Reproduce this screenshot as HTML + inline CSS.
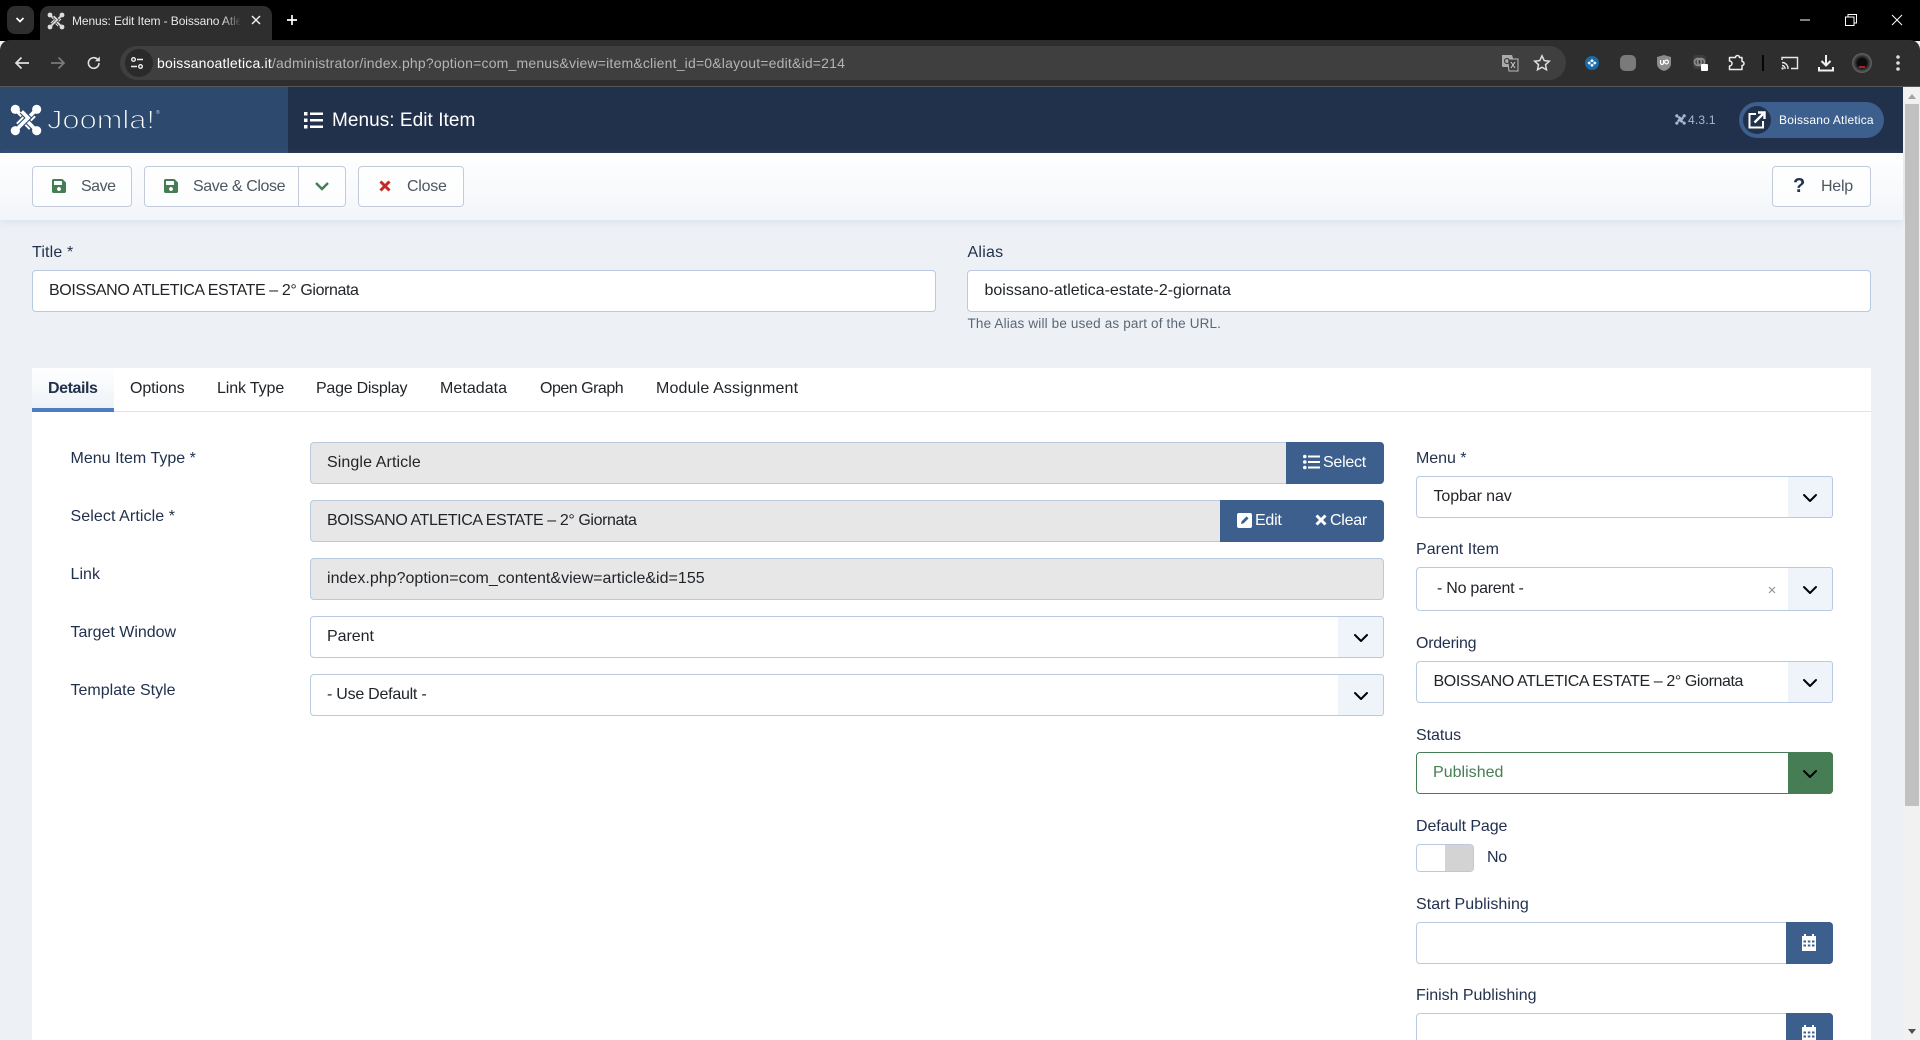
<!DOCTYPE html>
<html lang="it"><head><meta charset="utf-8"><title>Menus: Edit Item - Boissano Atletica</title>
<style>
html,body{margin:0;padding:0;width:1920px;height:1040px;overflow:hidden;background:#edf1f6;font-family:"Liberation Sans",Arial,sans-serif}
div,span,svg{position:absolute;box-sizing:border-box}
#p{left:0;top:0;width:1920px;height:1040px;overflow:hidden;background:#edf1f6}
.t{white-space:nowrap;line-height:20px;height:20px;font-size:16px;letter-spacing:-.25px;margin-top:1px}
.l{color:#22314d}.v{color:#212529}.g{color:#4e5660}
.box{border:1px solid #b9c9e0;border-radius:4px;background:#fff}
.ro{background:#e7e7e7}
.arr{background:#eff3fa;border-left:0;border-radius:0 3px 3px 0}
.blue{background:#3c5f8d}
.btn{border:1px solid #c3cbda;border-radius:4px;background:rgba(255,255,255,.7)}
.w{color:#fff}
.c{fill:none;stroke:#000;stroke-width:2;stroke-linecap:round;stroke-linejoin:round}
</style></head><body><div id="p">

<!-- tab strip -->
<div style="left:0;top:0;width:1920px;height:41px;background:#000"></div>
<div style="left:7px;top:6px;width:27px;height:28px;border-radius:8px;background:#2e2e2e"></div>
<svg style="left:15px;top:16px" width="10" height="8"><path d="M1.5 2l3.500 3.500 3.500-3.500" fill="none" stroke="#fff" stroke-width="1.700"/></svg>
<div style="left:40px;top:6px;width:232px;height:36px;border-radius:9px 9px 0 0;background:#2e2e2e"></div>
<svg style="left:47px;top:12px" width="18" height="18" viewBox="0 0 30 30"><g fill="none" stroke-width="3"><path stroke="#ddd" d="M5 5L17 17l6-6"/><path stroke="#2e2e2e" stroke-width="5" d="M25 5L13 17l6 6"/><path stroke="#ddd" d="M25 5L13 17l6 6"/><path stroke="#2e2e2e" stroke-width="5" d="M25 25L13 13l-6 6"/><path stroke="#ddd" d="M25 25L13 13l-6 6"/><path stroke="#2e2e2e" stroke-width="5" d="M5 25L17 13l-6-6"/><path stroke="#ddd" d="M5 25L17 13l-6-6"/></g><g fill="#ddd"><circle cx="5" cy="5" r="4"/><circle cx="25" cy="5" r="4"/><circle cx="5" cy="25" r="4"/><circle cx="25" cy="25" r="4"/></g></svg>
<div class="t" style="margin-top:0;left:72px;top:11px;width:168px;overflow:hidden;font-size:12px;letter-spacing:-.1px;color:#e8e8e8">Menus: Edit Item - Boissano Atletica</div>
<div style="left:222px;top:8px;width:20px;height:24px;background:linear-gradient(90deg,rgba(46,46,46,0),#2e2e2e)"></div>
<svg style="left:251px;top:15px" width="10" height="10"><path d="M1 1l8 8M9 1l-8 8" stroke="#eee" stroke-width="1.500"/></svg>
<svg style="left:286px;top:14px" width="12" height="12"><path d="M6 1v10M1 6h10" stroke="#fff" stroke-width="1.700"/></svg>
<svg style="left:1799px;top:19px" width="12" height="2"><path d="M1 1h10" stroke="#fff"/></svg>
<svg style="left:1845px;top:14px" width="12" height="12"><path d="M.5 3h8.500v8.500H.5zM3 3V.500h8.500V9H9" fill="none" stroke="#fff"/></svg>
<svg style="left:1891px;top:14px" width="12" height="12"><path d="M1 1l10 10M11 1L1 11" stroke="#fff"/></svg>

<!-- toolbar -->
<div style="left:0;top:40px;width:1920px;height:47px;background:#2e2e2e;border-radius:10px 10px 0 0;border-bottom:1px solid #585858"></div>
<svg style="left:13px;top:55px" width="18" height="16"><path d="M16 8H3M8.500 2.500L3 8l5.500 5.500" fill="none" stroke="#e0e0e0" stroke-width="1.700"/></svg>
<svg style="left:49px;top:55px" width="18" height="16"><path d="M2 8h13M9.500 2.500L15 8l-5.500 5.500" fill="none" stroke="#7a7a7a" stroke-width="1.700"/></svg>
<svg style="left:86px;top:55px" width="16" height="16"><path d="M13 8a5.300 5.300 0 1 1-1.600-3.800L13.500 6" fill="none" stroke="#e0e0e0" stroke-width="1.600"/><path d="M13.800 1.500v4.800H9" fill="#e0e0e0"/></svg>
<div style="left:120px;top:46px;width:1446px;height:34px;border-radius:17px;background:#3f3f3f"></div>
<div style="left:125px;top:49px;width:28px;height:28px;border-radius:14px;background:#2a2a2a"></div>
<svg style="left:130px;top:56px" width="14" height="14"><g fill="none" stroke="#eee" stroke-width="1.400"><circle cx="3.500" cy="3.500" r="1.800"/><circle cx="10.500" cy="10.500" r="1.800"/><path d="M7 3.500h6M1 10.500h6"/></g></svg>
<div class="t" style="left:157px;top:51.500px;font-size:14px;letter-spacing:.19px;color:#b4b4b4"><span style="position:static;color:#fff">boissanoatletica.it</span>/administrator/index.php?option=com_menus&amp;view=item&amp;client_id=0&amp;layout=edit&amp;id=214</div>
<svg style="left:1501px;top:54px" width="18" height="18"><path d="M1 1h10l1 3v9H2a1 1 0 0 1-1-1z" fill="#aaa"/><path d="M6.500 5h10.500v12H8z" fill="#3f3f3f" stroke="#bbb"/><path d="M10 8l4 6M14 8l-4 6" stroke="#ccc"/><circle cx="6" cy="7" r="2.500" fill="none" stroke="#444" stroke-width="1.200"/></svg>
<svg style="left:1533px;top:54px" width="18" height="18"><path d="M9 1.800l2.200 4.800 5.100.6-3.800 3.500 1 5.100L9 13.200l-4.500 2.600 1-5.100L1.700 7.200l5.100-.6z" fill="none" stroke="#ddd" stroke-width="1.500"/></svg>
<svg style="left:1585px;top:56px" width="14" height="14"><circle cx="7" cy="7" r="7" fill="#1c6ba6"/><path d="M7 3l1.800 1.800L7 6.500 5.200 4.800zM7 7.500l1.800 1.800L7 11 5.200 9.300zM4.200 5.300L6 7 4.200 8.800 2.500 7zM9.800 5.300L11.500 7 9.800 8.800 8 7z" fill="#fff"/></svg>
<div style="left:1620px;top:55px;width:16px;height:16px;border-radius:5px;background:#7a7a7a"></div>
<svg style="left:1657px;top:55px" width="14" height="16"><path d="M7 0l7 2v7c0 3.500-3.500 6-7 7-3.500-1-7-3.500-7-7V2z" fill="#8c8c8c"/><path d="M3.500 5v3a1.500 1.500 0 0 0 3 0V5" fill="none" stroke="#fff" stroke-width="1.200"/><circle cx="9.500" cy="7" r="1.900" fill="none" stroke="#fff" stroke-width="1.200"/></svg>
<svg style="left:1693px;top:55px" width="15" height="16"><rect width="13" height="14" rx="3" fill="#3c3c3c"/><circle cx="5" cy="7" r="3.500" fill="none" stroke="#8a8a8a" stroke-width="1.800"/><circle cx="8" cy="7" r="3.500" fill="none" stroke="#8a8a8a" stroke-width="1.800"/><rect x="8" y="9" width="7" height="7" rx="1" fill="#fff"/></svg>
<svg style="left:1728px;top:54px" width="17" height="18"><path d="M5 3.500h2.500a2 2 0 0 1 4 0H14v4a2 2 0 0 1 0 4V15.500H1.500V12a2.500 2.500 0 0 0 0-5V3.500z" fill="none" stroke="#eee" stroke-width="1.500" stroke-linejoin="round"/></svg>
<div style="left:1762px;top:55px;width:2px;height:16px;background:#050505"></div>
<svg style="left:1781px;top:56px" width="18" height="14"><path d="M1 4V1.500h15.500v11H10" fill="none" stroke="#e8e8e8" stroke-width="1.400"/><path d="M1 6.500a6 6 0 0 1 6 6.500M1 9.500a3 3 0 0 1 3 3.500" fill="none" stroke="#e8e8e8" stroke-width="1.400"/><circle cx="1.600" cy="12.400" r="1.200" fill="#e8e8e8"/></svg>
<svg style="left:1818px;top:54px" width="16" height="18"><path d="M8 1v10M3.500 7L8 11.500 12.500 7" fill="none" stroke="#f0f0f0" stroke-width="2"/><path d="M1 13v3.500h14V13" fill="none" stroke="#f0f0f0" stroke-width="2"/></svg>
<div style="left:1852px;top:53px;width:20px;height:20px;border-radius:10px;background:radial-gradient(circle at 50% 50%,#0c0c0c 0,#0c0c0c 32%,#555 62%,#8a8a8a 100%)"></div>
<div style="left:1859px;top:66px;width:6px;height:2px;background:#a22"></div>
<svg style="left:1895px;top:55px" width="6" height="16"><circle cx="3" cy="2" r="1.800" fill="#ddd"/><circle cx="3" cy="8" r="1.800" fill="#ddd"/><circle cx="3" cy="14" r="1.800" fill="#ddd"/></svg>

<!-- joomla header -->
<div style="left:0;top:87px;width:1903px;height:66px;background:#22314b"></div>
<div style="left:0;top:87px;width:288px;height:66px;background:#2d4a6e"></div>
<svg style="left:10px;top:104px" width="32" height="32" viewBox="0 0 30 30"><g fill="none" stroke-width="3.400"><path stroke="#fff" d="M5 5L17 17l6-6"/><path stroke="#2d4a6e" stroke-width="5.400" d="M25 5L13 17l6 6"/><path stroke="#fff" d="M25 5L13 17l6 6"/><path stroke="#2d4a6e" stroke-width="5.400" d="M25 25L13 13l-6 6"/><path stroke="#fff" d="M25 25L13 13l-6 6"/><path stroke="#2d4a6e" stroke-width="5.400" d="M5 25L17 13l-6-6"/><path stroke="#fff" d="M5 25L17 13l-6-6"/></g><g fill="#fff"><circle cx="5" cy="5" r="4.300"/><circle cx="25" cy="5" r="4.300"/><circle cx="5" cy="25" r="4.300"/><circle cx="25" cy="25" r="4.300"/></g></svg>
<svg style="left:44px;top:100px" width="120" height="36"><text x="3" y="28.500" font-family="Liberation Sans" font-size="26" textLength="108" lengthAdjust="spacingAndGlyphs" fill="#fff" stroke="#2d4a6e" stroke-width="1.100">Joomla!</text><text x="112" y="14" font-family="Liberation Sans" font-size="5" fill="#c8d2e0">®</text></svg>
<svg style="left:304px;top:111px" width="20" height="18" fill="#fff"><rect x="0" y="1" width="3.500" height="3.500"/><rect x="0" y="7.500" width="3.500" height="3.500"/><rect x="0" y="14" width="3.500" height="3.500"/><rect x="6" y="1.500" width="13" height="2.500"/><rect x="6" y="8" width="13" height="2.500"/><rect x="6" y="14.500" width="13" height="2.500"/></svg>
<div class="t w" style="left:332px;top:110px;font-size:19px;letter-spacing:.05px">Menus: Edit Item</div>
<svg style="left:1675px;top:114px" width="11" height="11" viewBox="0 0 30 30"><g fill="none" stroke="#a9b8cf" stroke-width="4"><path d="M5 5L17 17l6-6"/><path d="M25 5L13 17l6 6"/><path d="M25 25L13 13l-6 6"/><path d="M5 25L17 13l-6-6"/></g><g fill="#a9b8cf"><circle cx="5" cy="5" r="4.300"/><circle cx="25" cy="5" r="4.300"/><circle cx="5" cy="25" r="4.300"/><circle cx="25" cy="25" r="4.300"/></g></svg>
<div class="t" style="margin-top:0;left:1688px;top:110px;font-size:12px;letter-spacing:.2px;color:#a9b8cf">4.3.1</div>
<div style="left:1739px;top:102px;width:145px;height:36px;border-radius:18px;background:#3c5f8d"></div>
<div style="left:1743px;top:106px;width:28px;height:28px;border-radius:14px;background:#22314b"></div>
<svg style="left:1748px;top:111px" width="18" height="18"><path d="M8 3H1.500v13.500H15V10" fill="none" stroke="#fff" stroke-width="2"/><path d="M6.500 11.500L15 3M10 1.500h6.500V8" fill="none" stroke="#fff" stroke-width="2.400"/></svg>
<div class="t w" style="margin-top:0;left:1779px;top:110px;font-size:12px;letter-spacing:.2px">Boissano Atletica</div>

<!-- scrollbar -->
<div style="left:1903px;top:87px;width:17px;height:953px;background:#f1f1f1"></div>
<div style="left:1905px;top:104px;width:14px;height:702px;background:#c1c1c1"></div>
<svg style="left:1906px;top:93px" width="12" height="7"><path d="M6 1l4 5H2z" fill="#a3a3a3"/></svg>
<svg style="left:1906px;top:1028px" width="12" height="7"><path d="M2 1h8L6 6z" fill="#505050"/></svg>

<!-- action bar -->
<div style="left:0;top:153px;width:1903px;height:67px;background:linear-gradient(#fff,#f2f5fa);box-shadow:0 2px 8px rgba(160,180,210,.25)"></div>
<div class="btn" style="left:32px;top:166px;width:100px;height:41px"></div>
<svg style="left:52px;top:178px" width="14" height="16" viewBox="0 0 448 512"><path fill="#457d54" d="M433.941 129.941l-83.882-83.882A48 48 0 0 0 316.118 32H48C21.490 32 0 53.490 0 80v352c0 26.510 21.490 48 48 48h352c26.510 0 48-21.490 48-48V163.882a48 48 0 0 0-14.059-33.941zM224 416c-35.346 0-64-28.654-64-64 0-35.346 28.654-64 64-64s64 28.654 64 64c0 35.346-28.654 64-64 64zm96-304.520V212c0 6.627-5.373 12-12 12H76c-6.627 0-12-5.373-12-12V108c0-6.627 5.373-12 12-12h228.520c3.183 0 6.235 1.264 8.485 3.515l3.480 3.480A11.996 11.996 0 0 1 320 111.480z"/></svg>
<div class="t g" style="left:81px;top:176px;letter-spacing:-.5px">Save</div>
<div class="btn" style="left:144px;top:166px;width:202px;height:41px"></div>
<div style="left:298px;top:167px;width:1px;height:39px;background:#c3cbda"></div>
<svg style="left:164px;top:178px" width="14" height="16" viewBox="0 0 448 512"><path fill="#457d54" d="M433.941 129.941l-83.882-83.882A48 48 0 0 0 316.118 32H48C21.490 32 0 53.490 0 80v352c0 26.510 21.490 48 48 48h352c26.510 0 48-21.490 48-48V163.882a48 48 0 0 0-14.059-33.941zM224 416c-35.346 0-64-28.654-64-64 0-35.346 28.654-64 64-64s64 28.654 64 64c0 35.346-28.654 64-64 64zm96-304.520V212c0 6.627-5.373 12-12 12H76c-6.627 0-12-5.373-12-12V108c0-6.627 5.373-12 12-12h228.520c3.183 0 6.235 1.264 8.485 3.515l3.480 3.480A11.996 11.996 0 0 1 320 111.480z"/></svg>
<div class="t g" style="left:193px;top:176px;letter-spacing:-.4px">Save &amp; Close</div>
<svg style="left:314px;top:181px" width="16" height="10"><path d="M2 2l6 6 6-6" fill="none" stroke="#457d54" stroke-width="2.400"/></svg>
<div class="btn" style="left:358px;top:166px;width:106px;height:41px"></div>
<svg style="left:379px;top:180px" width="12" height="12"><path d="M1.500 1.500l9 9M10.500 1.500l-9 9" stroke="#c52827" stroke-width="3"/></svg>
<div class="t g" style="left:407px;top:176px">Close</div>
<div class="btn" style="left:1772px;top:166px;width:99px;height:41px"></div>
<div class="t" style="left:1793px;top:175px;font-size:20px;font-weight:bold;color:#22314d">?</div>
<div class="t g" style="left:1821px;top:176px">Help</div>

<!-- title/alias -->
<div class="t l" style="left:32px;top:242px;letter-spacing:.15px">Title *</div>
<div class="box" style="left:32px;top:270px;width:904px;height:42px"></div>
<div class="t v" style="left:49px;top:280px;letter-spacing:-.4px">BOISSANO ATLETICA ESTATE – 2° Giornata</div>
<div class="t l" style="left:967.500px;top:242px;letter-spacing:.25px">Alias</div>
<div class="box" style="left:967px;top:270px;width:904px;height:42px"></div>
<div class="t v" style="left:984.500px;top:280px;letter-spacing:0">boissano-atletica-estate-2-giornata</div>
<div class="t" style="margin-top:0;left:967.500px;top:314px;font-size:13.500px;letter-spacing:.16px;color:#5c6672">The Alias will be used as part of the URL.</div>

<!-- panel -->
<div style="left:32px;top:368px;width:1839px;height:672px;background:#fff"></div>
<div style="left:32px;top:411px;width:1839px;height:1px;background:#dfe4ec"></div>
<div style="left:32px;top:368px;width:82px;height:44px;background:linear-gradient(#fff,#eef2f7);border-bottom:4px solid #4a7fc1"></div>
<div class="t" style="left:48px;top:378px;font-weight:bold;color:#22314d;letter-spacing:-.42px">Details</div>
<div class="t v" style="left:130px;top:378px;letter-spacing:-.08px">Options</div>
<div class="t v" style="left:217px;top:378px;letter-spacing:-.12px">Link Type</div>
<div class="t v" style="left:316px;top:378px">Page Display</div>
<div class="t v" style="left:440px;top:378px;letter-spacing:.05px">Metadata</div>
<div class="t v" style="left:540px;top:378px;letter-spacing:-.49px">Open Graph</div>
<div class="t v" style="left:656px;top:378px;letter-spacing:.15px">Module Assignment</div>

<!-- left column -->
<div class="t l" style="left:70.500px;top:448px;letter-spacing:.02px">Menu Item Type *</div>
<div class="box ro" style="left:310px;top:442px;width:1074px;height:42px"></div>
<div class="t v" style="left:327px;top:452px;letter-spacing:.1px">Single Article</div>
<div class="blue" style="left:1286px;top:442px;width:98px;height:42px;border-radius:0 4px 4px 0"></div>
<svg style="left:1303px;top:454px" width="17" height="16" fill="#fff"><circle cx="1.800" cy="2.500" r="1.800"/><circle cx="1.800" cy="8" r="1.800"/><circle cx="1.800" cy="13.500" r="1.800"/><rect x="5" y="1.500" width="12" height="2"/><rect x="5" y="7" width="12" height="2"/><rect x="5" y="12.500" width="12" height="2"/></svg>
<div class="t w" style="left:1323px;top:452px">Select</div>

<div class="t l" style="left:70.500px;top:506px;letter-spacing:.09px">Select Article *</div>
<div class="box ro" style="left:310px;top:500px;width:1074px;height:42px"></div>
<div class="t v" style="left:327px;top:510px;letter-spacing:-.4px">BOISSANO ATLETICA ESTATE – 2° Giornata</div>
<div class="blue" style="left:1220px;top:500px;width:164px;height:42px;border-radius:0 4px 4px 0"></div>
<svg style="left:1237px;top:513px" width="15" height="15"><rect width="15" height="15" rx="2" fill="#fff"/><path d="M4 11l.6-2.600 5-5 2 2-5 5z" fill="#3c5f8d"/></svg>
<div class="t w" style="left:1255px;top:510px">Edit</div>
<svg style="left:1315px;top:514px" width="12" height="12"><path d="M1.500 1.500l9 9M10.500 1.500l-9 9" stroke="#fff" stroke-width="3"/></svg>
<div class="t w" style="left:1330px;top:510px">Clear</div>

<div class="t l" style="left:70.500px;top:564px;letter-spacing:.05px">Link</div>
<div class="box ro" style="left:310px;top:558px;width:1074px;height:42px"></div>
<div class="t v" style="left:327px;top:568px;letter-spacing:.02px">index.php?option=com_content&amp;view=article&amp;id=155</div>

<div class="t l" style="left:70.500px;top:622px;letter-spacing:-.02px">Target Window</div>
<div class="box" style="left:310px;top:616px;width:1074px;height:42px"></div>
<div class="box arr" style="left:1338px;top:616px;width:46px;height:42px"></div>
<div class="t v" style="left:327px;top:626px;letter-spacing:-.05px">Parent</div>
<svg style="left:1353px;top:633px" width="16" height="10"><path class="c" d="M2 2l6 6 6-6"/></svg>

<div class="t l" style="left:70.500px;top:680px;letter-spacing:.01px">Template Style</div>
<div class="box" style="left:310px;top:674px;width:1074px;height:42px"></div>
<div class="box arr" style="left:1338px;top:674px;width:46px;height:42px"></div>
<div class="t v" style="left:327px;top:684px">- Use Default -</div>
<svg style="left:1353px;top:691px" width="16" height="10"><path class="c" d="M2 2l6 6 6-6"/></svg>

<!-- right column -->
<div class="t l" style="left:1416px;top:448px;letter-spacing:-.05px">Menu *</div>
<div class="box" style="left:1416px;top:476px;width:417px;height:42px"></div>
<div class="box arr" style="left:1788px;top:476px;width:45px;height:42px"></div>
<div class="t v" style="left:1433.500px;top:486px;letter-spacing:-.1px">Topbar nav</div>
<svg style="left:1802px;top:493px" width="16" height="10"><path class="c" d="M2 2l6 6 6-6"/></svg>

<div class="t l" style="left:1416px;top:539px;letter-spacing:.02px">Parent Item</div>
<div class="box" style="left:1416px;top:567px;width:417px;height:44px"></div>
<div class="box arr" style="left:1788px;top:567px;width:45px;height:44px"></div>
<div class="t v" style="left:1437px;top:578px">- No parent -</div>
<svg style="left:1768px;top:586px" width="8" height="8"><path d="M1 1l6 6M7 1L1 7" stroke="#8f96a0" stroke-width="1.200"/></svg>
<svg style="left:1802px;top:585px" width="16" height="10"><path class="c" d="M2 2l6 6 6-6"/></svg>

<div class="t l" style="left:1416px;top:633px">Ordering</div>
<div class="box" style="left:1416px;top:661px;width:417px;height:42px"></div>
<div class="box arr" style="left:1788px;top:661px;width:45px;height:42px"></div>
<div class="t v" style="left:1433.500px;top:671px;letter-spacing:-.4px">BOISSANO ATLETICA ESTATE – 2° Giornata</div>
<svg style="left:1802px;top:678px" width="16" height="10"><path class="c" d="M2 2l6 6 6-6"/></svg>

<div class="t l" style="left:1416px;top:725px;letter-spacing:-.05px">Status</div>
<div class="box" style="left:1416px;top:752px;width:417px;height:42px;border-color:#457d54"></div>
<div style="left:1788px;top:752px;width:45px;height:42px;background:#467d55;border-radius:0 4px 4px 0"></div>
<div class="t" style="left:1433px;top:762px;color:#457d54;letter-spacing:.02px">Published</div>
<svg style="left:1802px;top:769px" width="16" height="10"><path class="c" d="M2 2l6 6 6-6"/></svg>

<div class="t l" style="left:1416px;top:816px;letter-spacing:-.1px">Default Page</div>
<div class="box" style="left:1416px;top:844px;width:58px;height:28px;overflow:hidden"><div style="left:28px;top:0;width:29px;height:26px;background:#d3d3d3"></div></div>
<div class="t l" style="left:1487px;top:847px">No</div>

<div class="t l" style="left:1416px;top:894px;letter-spacing:.05px">Start Publishing</div>
<div class="box" style="left:1416px;top:922px;width:417px;height:42px"></div>
<div class="blue" style="left:1786px;top:922px;width:47px;height:42px;border-radius:0 4px 4px 0"></div>
<svg style="left:1801px;top:934px" width="16" height="17"><g fill="#fff"><rect x="3" y="0" width="2" height="3"/><rect x="11" y="0" width="2" height="3"/><path d="M1 2h14v15H1z"/></g><g fill="#3c5f8d"><rect x="2.500" y="6.500" width="2.500" height="2"/><rect x="6.800" y="6.500" width="2.500" height="2"/><rect x="11" y="6.500" width="2.500" height="2"/><rect x="2.500" y="10.500" width="2.500" height="2"/><rect x="6.800" y="10.500" width="2.500" height="2"/><rect x="11" y="10.500" width="2.500" height="2"/></g></svg>

<div class="t l" style="left:1416px;top:985px;letter-spacing:-.03px">Finish Publishing</div>
<div class="box" style="left:1416px;top:1013px;width:417px;height:42px"></div>
<div class="blue" style="left:1786px;top:1013px;width:47px;height:42px;border-radius:0 4px 4px 0"></div>
<svg style="left:1801px;top:1025px" width="16" height="17"><g fill="#fff"><rect x="3" y="0" width="2" height="3"/><rect x="11" y="0" width="2" height="3"/><path d="M1 2h14v15H1z"/></g><g fill="#3c5f8d"><rect x="2.500" y="6.500" width="2.500" height="2"/><rect x="6.800" y="6.500" width="2.500" height="2"/><rect x="11" y="6.500" width="2.500" height="2"/><rect x="2.500" y="10.500" width="2.500" height="2"/><rect x="6.800" y="10.500" width="2.500" height="2"/><rect x="11" y="10.500" width="2.500" height="2"/></g></svg>

</div></body></html>
